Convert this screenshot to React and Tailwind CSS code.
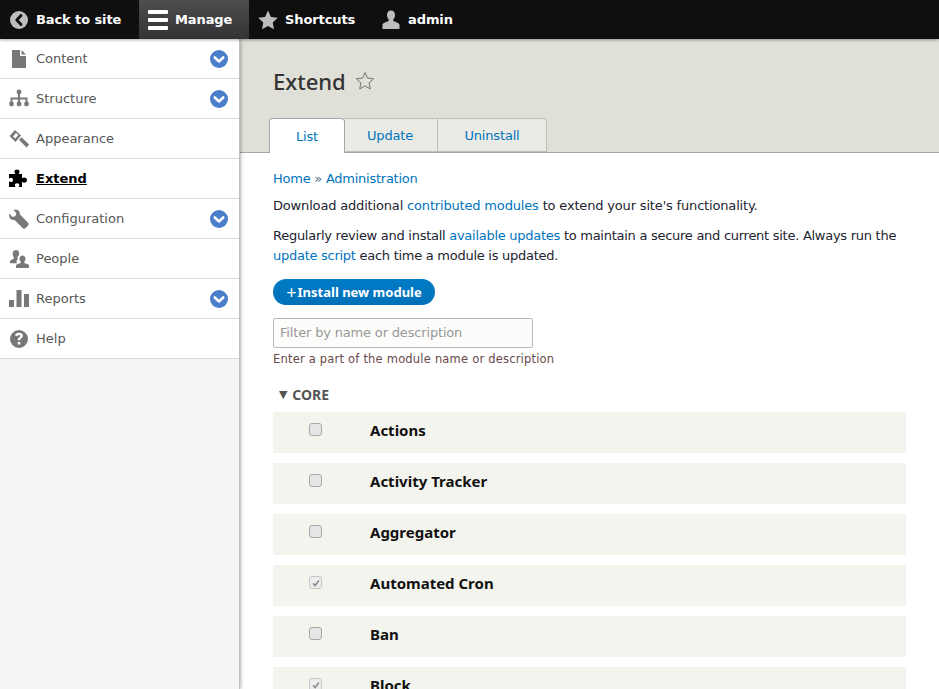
import React from "react";

const sans = "font-['DejaVu_Sans',Verdana,sans-serif]";
const heading = "font-['Noto_Sans','Open_Sans',sans-serif]";

// toolbar + menu icons, all on a 20x20 box
const icons = {
  content: <path d="M3 1h8v6h6v12H3zM12.500 1l4.500 4.500h-4.500z" />,
  structure: (
    <g>
      <circle cx="10" cy="3" r="2.400" />
      <circle cx="2.500" cy="15" r="2.400" />
      <circle cx="10" cy="15" r="2.400" />
      <circle cx="17.500" cy="15" r="2.400" />
      <path d="M9 4h2v4.500h7.500v6h-2v-4h-5.500v4H9v-4H3.500v4h-2v-6H9z" />
    </g>
  ),
  appearance: (
    <g>
      <path fillRule="evenodd" d="M.5 7L6 1l6 5.500L6.500 13zM4 7.500l2.300 2 3-3.400-2.300-2z" />
      <path d="M10 11l2.500-2.800 7.500 7.300-2.300 3z" />
    </g>
  ),
  extend: (
    <path d="M3 5h3.400c-.6-.8-1-1.500-1-2.200C5.400 1.400 6.600.5 8 .5s2.600.9 2.600 2.300c0 .7-.4 1.400-1 2.200H13v4.300c.7-.6 1.400-.9 2.200-.9 1.700 0 2.800 1.100 2.800 2.600 0 1.600-1.100 2.700-2.800 2.700-.8 0-1.500-.3-2.200-.9V18H9.600c.5-.8.8-1.300.8-1.900 0-1.200-1-1.900-2.300-1.900s-2.300.7-2.300 1.900c0 .6.300 1.100.8 1.900H0v-5.800c.8.500 1.400.8 2 .8 1.200 0 2-.9 2-2.100s-.8-2.100-2-2.100c-.6 0-1.200.3-2 .8V5z" />
  ),
  config: (
    <path
      transform="matrix(-1 0 0 1 20 0)"
      d="M13.500 .5c-2.800 0-4.800 2.300-4.400 5L1.200 13.400a2.400 2.400 0 0 0 0 3.400l2 2a2.400 2.400 0 0 0 3.400 0L14.500 10.900c2.900.5 5.400-1.600 5.400-4.400 0-.7-.1-1.200-.3-1.700l-3.200 3.100-3-.9-.8-2.900 3.100-3.100c-.7-.3-1.700-.5-2.600-.5z"
    />
  ),
  people: (
    <path d="M7 1c2 0 3.200 1.500 3.200 3.500 0 1.300-.5 2.300-1.300 3.100-.8.800-.8 1.800.1 2.200-1 .8-1.500 1.900-1.500 3 0 .5.100 1 .3 1.400H1v-1.800c0-1.400 3.600-1.900 3.900-3.400.1-.6-.2-.9-.6-1.500C3.800 6.700 3.700 5.700 3.700 4.500 3.700 2.500 5 1 7 1zM13.500 6.500c1.800 0 3 1.400 3 3.200 0 1.100-.4 2.100-1 2.800-.5.600-.4 1.300.4 1.700 1.400.6 4.100 1 4.100 2.100V19H7v-2.700c0-1.100 2.700-1.500 4.100-2.100.8-.4.900-1.100.4-1.700-.6-.7-1-1.700-1-2.800 0-1.800 1.200-3.200 3-3.200z" />
  ),
  reports: <path d="M0 11h5v7H0zM7.500 1h5v17h-5zM15 5h5v13h-5z" />,
  help: (
    <path
      fillRule="evenodd"
      d="M10 1a9 9 0 1 1 0 18 9 9 0 0 1 0-18zM10 3.700c-2.200 0-3.700 1.200-3.900 3.100l2.500.3c.1-.8.600-1.200 1.400-1.200.7 0 1.200.4 1.200 1 0 .5-.3.800-1 1.300-1 .7-1.400 1.300-1.400 2.400v.7h2.400v-.4c0-.6.200-.9 1-1.400 1.100-.8 1.700-1.500 1.700-2.700 0-1.900-1.600-3.100-3.900-3.100zM8.700 13v2.500h2.600V13z"
    />
  ),
};

const menu = [
  { label: "Content", icon: "content", sub: true },
  { label: "Structure", icon: "structure", sub: true },
  { label: "Appearance", icon: "appearance" },
  { label: "Extend", icon: "extend", active: true },
  { label: "Configuration", icon: "config", sub: true },
  { label: "People", icon: "people" },
  { label: "Reports", icon: "reports", sub: true },
  { label: "Help", icon: "help" },
];

const modules = [
  { name: "Actions" },
  { name: "Activity Tracker" },
  { name: "Aggregator" },
  { name: "Automated Cron", on: true },
  { name: "Ban" },
  { name: "Block", on: true },
];

function MenuIcon({ name, className }) {
  return (
    <svg viewBox="0 0 20 20" className={className} fill="currentColor">
      {icons[name]}
    </svg>
  );
}

function Chevron() {
  return (
    <svg viewBox="0 0 18 18" className="ml-auto mr-[11px] h-[18px] w-[18px]">
      <circle cx="9" cy="9" r="9" fill="#4a7fcb" />
      <path d="M4.800 7.500L9 11.500l4.200-4" fill="none" stroke="#fff" strokeWidth="2.600" strokeLinecap="round" strokeLinejoin="round" />
    </svg>
  );
}

function Toolbar() {
  return (
    <div className={`${sans} relative z-20 flex h-[39px] shrink-0 items-center bg-[#0f0f0f] text-[13px] font-bold tracking-[-0.1px] text-white shadow-[0_1px_3px_rgba(0,0,0,0.35)]`}>
      <a className="flex h-full w-[139px] items-center pl-[10px]">
        <svg viewBox="0 0 18 18" className="mr-[8px] h-[18px] w-[18px]">
          <circle cx="9" cy="9" r="9" fill="#bdbdbd" />
          <path d="M11 4.500L6.800 9l4.200 4.500" fill="none" stroke="#0f0f0f" strokeWidth="2.800" strokeLinecap="round" strokeLinejoin="round" />
        </svg>
        Back to site
      </a>
      <a className="flex h-full w-[110px] items-center bg-gradient-to-b from-[#4e4e4e] to-[#333333] pl-[9px]">
        <span className="mr-[7px] flex w-[20px] flex-col gap-[4px]">
          <span className="h-[4px] rounded-[1px] bg-white" />
          <span className="h-[4px] rounded-[1px] bg-white" />
          <span className="h-[4px] rounded-[1px] bg-white" />
        </span>
        Manage
      </a>
      <a className="flex h-full w-[123px] items-center pl-[9px]">
        <svg viewBox="0 0 20 20" className="mr-[7px] h-[20px] w-[20px]" fill="#bdbdbd">
          <path d="M10 .5l2.900 6.400 6.800.8-5 4.700 1.300 6.900-6-3.400-6 3.400 1.300-6.900-5-4.700 6.800-.8z" />
        </svg>
        Shortcuts
      </a>
      <a className="flex h-full items-center pl-[9px]">
        <svg viewBox="0 0 20 20" className="mr-[7px] h-[20px] w-[20px]" fill="#bdbdbd">
          <path d="M10 .5c2.600 0 4 2 4 4.500 0 1.700-.6 3-1.400 4-.7.900-.5 2 .7 2.500 2 .8 5.200 1.500 5.200 3.300V19H1.500v-4.200c0-1.800 3.200-2.500 5.200-3.300 1.200-.5 1.400-1.600.7-2.500C6.600 8 6 6.700 6 5c0-2.500 1.400-4.500 4-4.500z" />
        </svg>
        admin
      </a>
    </div>
  );
}

function Sidebar() {
  return (
    <nav className={`${sans} relative z-10 w-[240px] shrink-0 border-r border-[#bfbfbf] bg-[#f5f5f5] text-[13px] shadow-[0_0_4px_rgba(0,0,0,0.45)]`}>
      {menu.map((item) => (
        <div key={item.label} className="flex h-[40px] items-center border-b border-[#d9d9d9] bg-white pl-[9px]">
          <MenuIcon name={item.icon} className={`mr-[7px] h-[20px] w-[20px] ${item.active ? "text-black" : "text-[#787878]"}`} />
          <span className={item.active ? "font-bold text-black underline" : "text-[#565656]"}>{item.label}</span>
          {item.sub && <Chevron />}
        </div>
      ))}
    </nav>
  );
}

function Tab({ label, active, className = "" }) {
  if (active) {
    return (
      <a className={`relative z-10 -mb-px flex h-[35px] w-[76px] items-center justify-center rounded-t-[4px] border border-b-0 border-[#a6a6a6] bg-white pt-[2px] text-[#0074bd] ${className}`}>
        {label}
      </a>
    );
  }
  return (
    <a className={`flex h-[34px] items-center justify-center border border-l-0 border-[#bfbfba] bg-[#ebebe5] pt-[2px] text-[#0074bd] ${className}`}>
      {label}
    </a>
  );
}

function ModuleRow({ name, on }) {
  return (
    <div className="mb-[10px] flex h-[41px] shrink-0 bg-[#f3f4ee]">
      <div className="w-[97px] pl-[36px] pt-[11px]">
        <span className={`flex h-[13px] w-[13px] items-center justify-center rounded-[3px] border ${on ? "border-[#c8c8c8] bg-[#ececec]" : "border-[#a8a8a8] bg-[#e6e6e6]"}`}>
          {on && (
            <svg viewBox="0 0 12 12" className="h-[10px] w-[10px]">
              <path d="M2.500 6.500L5 9l4.500-6" fill="none" stroke="#8f8f8f" strokeWidth="2" />
            </svg>
          )}
        </span>
      </div>
      <div className={`${heading} pt-[8px] text-[15px] leading-[20px] font-bold tracking-normal text-[#111]`}>{name}</div>
    </div>
  );
}

function Main() {
  return (
    <main className={`${sans} min-w-0 flex-1 overflow-hidden bg-white text-[13px] tracking-[-0.17px] text-[#222330]`}>
      <div className="flex h-[114px] flex-col justify-end border-b border-[#a6a6a6] bg-[#e0e0d8] pl-[29px]">
        <div className="flex items-center pb-[22px] pl-[4px]">
          <h1 className={`${heading} text-[22px] leading-[30px] font-medium tracking-normal text-[#333]`}>Extend</h1>
          <svg viewBox="0 0 20 20" className="ml-[9px] h-[20px] w-[20px]" fill="none" stroke="#777768" strokeWidth="1">
            <path d="M10 1.500l2.500 5.600 6.100.7-4.500 4.100 1.200 6-5.300-3-5.300 3 1.200-6-4.500-4.100 6.100-.7z" />
          </svg>
        </div>
        <div className="flex items-end text-[13px]">
          <Tab label="List" active />
          <Tab label="Update" className="w-[93px] pr-[2px]" />
          <Tab label="Uninstall" className="w-[109px] rounded-tr-[4px]" />
        </div>
      </div>

      <div className="pl-[33px] pr-[33px] leading-[20px]">
        <div className="mt-[16px] tracking-[-0.25px] text-[#0074bd]">
          Home <span className="text-[#4e6f91]">»</span> Administration
        </div>
        <p className="mt-[7px]">
          Download additional <a className="text-[#0074bd]">contributed modules</a> to extend your site's functionality.
        </p>
        <p className="mt-[10px] leading-[20px] tracking-[-0.27px]">
          Regularly review and install <a className="text-[#0074bd]">available updates</a> to maintain a secure and current site. Always run the <a className="text-[#0074bd]">update script</a> each time a module is updated.
        </p>
        <a className={`${heading} mt-[13px] flex h-[26px] w-[162px] items-center justify-center rounded-full bg-gradient-to-b from-[#007bc6] to-[#0071b8] pb-[1px] text-[13px] font-bold tracking-normal text-white`}>
          <span className="mr-px text-[18px] leading-[18px] font-normal">+</span>Install new module
        </a>
        <input
          placeholder="Filter by name or description"
          className="mt-[13px] block h-[30px] w-[260px] rounded-[2px] border border-[#b8b8b8] bg-[#fcfcfa] px-[6px] pb-[2px] text-[13px] tracking-[-0.17px] placeholder:text-[#999]"
        />
        <div className="mt-[1px] text-[11.5px] leading-[20px] tracking-[0.2px] text-[#68494a]">Enter a part of the module name or description</div>
        <div className="mt-[16px] flex h-[20px] items-center pl-[6px] text-[#555]">
          <span className="mr-[5px] text-[11px]">▼</span>
          <span className={`${heading} text-[14px] font-bold tracking-normal`}>CORE</span>
        </div>
        <div className="mt-[7px] flex flex-col">
          {modules.map((m) => (
            <ModuleRow key={m.name} {...m} />
          ))}
        </div>
      </div>
    </main>
  );
}

export default function App() {
  return (
    <div className="flex h-[689px] w-[939px] flex-col overflow-hidden">
      <Toolbar />
      <div className="flex min-h-0 flex-1">
        <Sidebar />
        <Main />
      </div>
    </div>
  );
}
